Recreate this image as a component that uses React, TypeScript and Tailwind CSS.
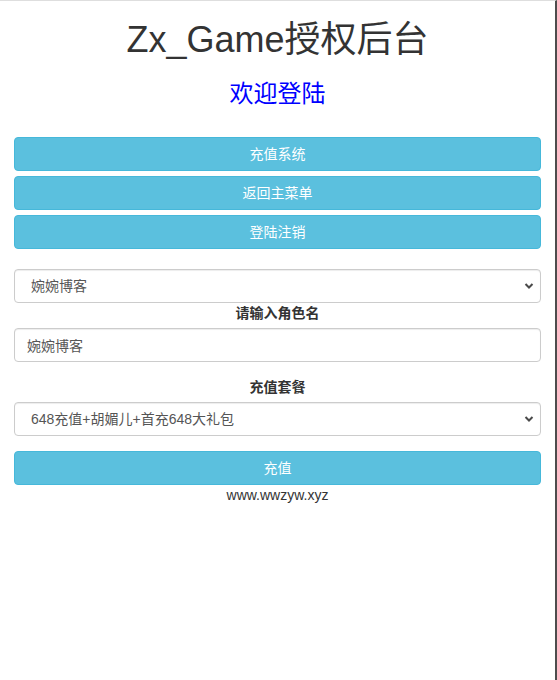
import React from 'react';

const font = { fontFamily: '"Liberation Sans", Arial, "Noto Sans CJK SC", sans-serif' };

const Chevron = () => (
  <svg
    className="pointer-events-none absolute right-[7px] top-1/2 -translate-y-1/2"
    width="10"
    height="7"
    viewBox="0 0 10 7"
  >
    <path d="M1.5 1.5 L5 5 L8.5 1.5" fill="none" stroke="#4a4a4a" strokeWidth="2" />
  </svg>
);

const ActionButton: React.FC<{ label: string; className?: string }> = ({ label, className }) => (
  <button
    className={`h-[34px] w-full rounded-[4px] border border-[#46b8da] bg-[#5bc0de] text-[14px] text-white ${className ?? ''}`}
  >
    {label}
  </button>
);

const SelectBox: React.FC<{ options: string[] }> = ({ options }) => (
  <div className="relative">
    <select className="h-[34px] w-full appearance-none rounded-[4px] border border-[#ccc] bg-white pl-[16px] pr-8 text-[14px] text-[#555] shadow-[inset_0_1px_1px_rgba(0,0,0,0.075)] outline-none">
      {options.map((o) => (
        <option key={o}>{o}</option>
      ))}
    </select>
    <Chevron />
  </div>
);

export default function App() {
  return (
    <div
      style={font}
      className="min-h-[680px] w-[557px] border-t border-t-[#dedede] border-r-2 border-r-[#4d4d4d] bg-white px-[14px] text-[14px] leading-[20px] text-[#333]"
    >
      <h1 className="mt-[19px] text-center text-[36px] leading-[40px] text-[#333]">Zx_Game授权后台</h1>
      <h3 className="mt-[21px] text-center text-[24px] leading-[26px] text-[#0000ff]">欢迎登陆</h3>

      {/* 菜单按钮 */}
      <div className="mt-[30px] flex flex-col gap-[5px]">
        <ActionButton label="充值系统" />
        <ActionButton label="返回主菜单" />
        <ActionButton label="登陆注销" />
      </div>

      {/* 充值表单 */}
      <div className="mt-[20px]">
        <SelectBox options={['婉婉博客']} />
        <label className="block text-center font-bold">请输入角色名</label>
        <input
          defaultValue="婉婉博客"
          className="mt-[5px] h-[34px] w-full rounded-[4px] border border-[#ccc] px-[12px] text-[14px] text-[#555] shadow-[inset_0_1px_1px_rgba(0,0,0,0.075)] outline-none"
        />
        <label className="mt-[15px] block text-center font-bold">充值套餐</label>
        <div className="mt-[5px]">
          <SelectBox options={['648充值+胡媚儿+首充648大礼包']} />
        </div>
        <ActionButton label="充值" className="mt-[15px]" />
        <p className="text-center">www.wwzyw.xyz</p>
      </div>
    </div>
  );
}
